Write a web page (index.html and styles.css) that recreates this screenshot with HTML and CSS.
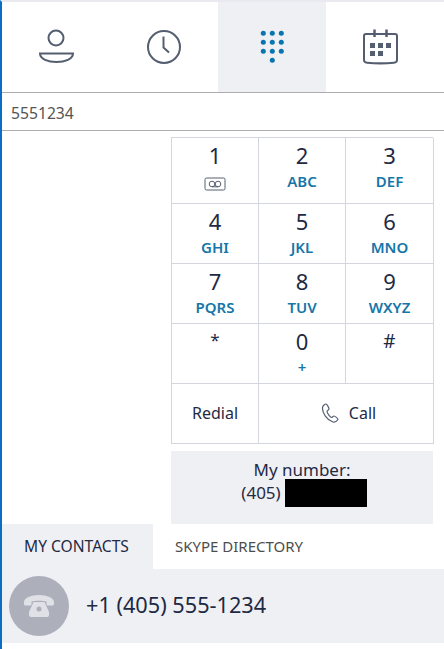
FILE: index.html
```html
<!DOCTYPE html>
<html lang="en">
<head>
    <meta charset="UTF-8">
    <meta name="viewport" content="width=device-width, initial-scale=1.0">
    <title>Dial Pad</title>
    <link rel="stylesheet" href="styles.css">
</head>
<body>

    <div class="app">
        <nav class="main-tabs">
            <div class="main-tab">
                <svg class="tab-icon" viewBox="0 0 40 40">
                    <circle cx="20" cy="11" r="7.5"/>
                    <path d="M4 26.5H37C37 32 29 35 20.5 35C12 35 4 32 4 26.5Z"/>
                </svg>
            </div>
            <div class="main-tab">
                <svg class="tab-icon" viewBox="0 0 40 40">
                    <circle cx="20" cy="20" r="16"/>
                    <path d="M19.5 9.5V20.5L25 25.5"/>
                </svg>
            </div>
            <div class="main-tab active">
                <svg class="tab-icon dots" viewBox="0 0 40 40">
                    <circle cx="11.3" cy="6.3" r="2.5"/><circle cx="20.3" cy="6.3" r="2.5"/><circle cx="29.3" cy="6.3" r="2.5"/>
                    <circle cx="11.3" cy="15.3" r="2.5"/><circle cx="20.3" cy="15.3" r="2.5"/><circle cx="29.3" cy="15.3" r="2.5"/>
                    <circle cx="11.3" cy="24.3" r="2.5"/><circle cx="20.3" cy="24.3" r="2.5"/><circle cx="29.3" cy="24.3" r="2.5"/>
                    <circle cx="20.3" cy="33.3" r="2.5"/>
                </svg>
            </div>
            <div class="main-tab">
                <svg class="tab-icon" viewBox="0 0 40 40">
                    <path d="M6 7H35C36.5 7 37 8 37 9V33C37 35 36 35.500 34 35.700C26 36.500 15 36.500 7 35.700C5 35.500 4 35 4 33V9C4 8 4.500 7 6 7Z"/>
                    <path class="peg" d="M14.500 2.500V10M26.500 2.500V10"/>
                    <path class="fill" d="M10 16h5v5h-5zM18 16h5v5h-5zM26 16h5v5h-5zM10 24h5v5h-5zM18 24h5v5h-5z"/>
                </svg>
            </div>
        </nav>

        <div class="number-input">5551234</div>

        <div class="dial-area">
            <div class="keypad">
                <div class="key">
                    <span class="digit">1</span>
                    <svg class="voicemail" viewBox="0 0 22 14">
                        <rect x="1" y="1" width="20" height="12" rx="1.500"/>
                        <circle cx="8" cy="7" r="2.800"/>
                        <circle cx="14" cy="7" r="2.800"/>
                        <path d="M8 9.800H14"/>
                    </svg>
                </div>
                <div class="key"><span class="digit">2</span><span class="letters">ABC</span></div>
                <div class="key"><span class="digit">3</span><span class="letters">DEF</span></div>
                <div class="key"><span class="digit">4</span><span class="letters">GHI</span></div>
                <div class="key"><span class="digit">5</span><span class="letters">JKL</span></div>
                <div class="key"><span class="digit">6</span><span class="letters">MNO</span></div>
                <div class="key"><span class="digit">7</span><span class="letters">PQRS</span></div>
                <div class="key"><span class="digit">8</span><span class="letters">TUV</span></div>
                <div class="key"><span class="digit">9</span><span class="letters">WXYZ</span></div>
                <div class="key"><span class="digit star">*</span></div>
                <div class="key"><span class="digit">0</span><span class="letters">+</span></div>
                <div class="key"><span class="digit hash">#</span></div>
                <div class="key action">Redial</div>
                <div class="key action call">
                    <svg class="call-icon" viewBox="0 0 18 20">
                        <path d="M1.500 4.500C1 10 6 17 12 19C14 19.500 16 18 17 16.500C17 15.500 14 13 13 13C12 13 11.500 14.500 10.500 14.500C9 14 6 10 6 8.500C6 7.500 8 7 8 6C8 5 6 1 5 1C4 1 2 2.500 1.500 4.500Z"/>
                    </svg>
                    Call
                </div>
            </div>

            <div class="my-number">
                <div>My number:</div>
                <div class="my-number-line">(405) <span class="redacted"></span></div>
            </div>
        </div>

        <div class="sub-tabs">
            <div class="sub-tab active">MY CONTACTS</div>
            <div class="sub-tab">SKYPE DIRECTORY</div>
        </div>

        <div class="contact-row">
            <div class="avatar">
                <svg class="avatar-icon" viewBox="0 0 30 22">
                    <path d="M0 7C0 3 7 0 15 0C23 0 30 3 30 7V9C30 10 29 10.500 28 10.500H24C23 10.500 22.500 10 22.500 9V6.500C20 5.500 10 5.500 7.500 6.500V9C7.500 10 7 10.500 6 10.500H2C1 10.500 0 10 0 9Z"/>
                    <path fill-rule="evenodd" d="M9.500 7H20.500L25 17V20C25 21 24 22 23 22H7C6 22 5 21 5 20V17ZM15 11.500A2.500 2.500 0 1 0 15 16.500A2.500 2.500 0 1 0 15 11.500Z"/>
                </svg>
            </div>
            <span class="contact-number">+1 (405) 555-1234</span>
        </div>
    </div>

</body>
</html>
```

FILE: styles.css
```css
/* General Styles */
* {
    margin: 0;
    padding: 0;
    box-sizing: border-box;
}

body {
    font-family: "Noto Sans", "Open Sans", sans-serif;
    background-color: white;
    color: #1f2a44;
}

.app {
    width: 444px;
    height: 649px;
    border-left: 2px solid #0a6fc2;
    border-top: 2px solid #e9e9ef;
    overflow: hidden;
}

/* Top tabs */
.main-tabs {
    display: grid;
    grid-template-columns: repeat(4, 108px);
    height: 91px;
    border-bottom: 1px solid #adadad;
}

.main-tab {
    display: flex;
    justify-content: center;
    align-items: center;
}

.main-tab.active {
    background-color: #eff0f4;
}

.tab-icon {
    width: 40px;
    height: 40px;
    fill: none;
    stroke: #555e70;
    stroke-width: 2;
}

.tab-icon.dots {
    fill: #0a74b0;
    stroke: none;
}

.tab-icon .peg {
    stroke-width: 2.500;
}

.tab-icon .fill {
    fill: #555e70;
    stroke: none;
}

/* Number field */
.number-input {
    height: 38px;
    padding: 10px 0 0 9px;
    font-size: 15.700px;
    line-height: 20px;
    color: #555;
    border-bottom: 1px solid #adadad;
}

/* Keypad */
.dial-area {
    width: 262px;
    margin: 6px 0 0 169px;
}

.keypad {
    display: grid;
    grid-template-columns: 87px 87px 88px;
    grid-template-rows: 66px repeat(4, 60px);
    border-top: 1px solid #d3d6df;
    border-left: 1px solid #d3d6df;
}

.key {
    display: flex;
    flex-direction: column;
    align-items: center;
    border-right: 1px solid #d3d6df;
    border-bottom: 1px solid #d3d6df;
}

.digit {
    font-size: 22px;
    line-height: 30px;
    margin-top: 2px;
}

.digit.star {
    font-size: 17px;
    margin-top: 1px;
}

.digit.hash {
    font-size: 19px;
}

.letters {
    font-size: 15px;
    line-height: 20px;
    font-weight: 600;
    color: #1676a8;
    margin-top: 1px;
}

.voicemail {
    width: 22px;
    height: 14px;
    margin-top: 7px;
    fill: none;
    stroke: #555e70;
    stroke-width: 1;
}

.key.action {
    flex-direction: row;
    justify-content: center;
    font-size: 16px;
    padding-bottom: 2px;
}

.key.call {
    grid-column: span 2;
    gap: 10px;
    padding-left: 5px;
}

.call-icon {
    width: 18px;
    height: 20px;
    fill: none;
    stroke: #555e70;
    stroke-width: 1.200;
}

/* My number */
.my-number {
    height: 73px;
    margin-top: 7px;
    padding-top: 7px;
    background-color: #eff0f4;
    text-align: center;
    font-size: 17px;
    line-height: 24px;
}

.my-number-line {
    display: flex;
    justify-content: center;
    align-items: center;
    gap: 4px;
    margin-top: -3px;
    padding-left: 4px;
}

.redacted {
    width: 82px;
    height: 28px;
    background-color: black;
}

/* Contact tabs */
.sub-tabs {
    display: flex;
    height: 45px;
}

.sub-tab {
    width: 151px;
    padding-left: 22px;
    font-size: 15px;
    line-height: 45px;
    color: #4d4d4d;
    white-space: nowrap;
}

.sub-tab.active {
    background-color: #eff0f4;
    color: #1f2a44;
    font-size: 15.600px;
}

/* Contact row */
.contact-row {
    display: flex;
    align-items: center;
    gap: 17px;
    height: 74px;
    padding-left: 7px;
    background-color: #eff0f4;
}

.avatar {
    display: flex;
    justify-content: center;
    align-items: center;
    width: 60px;
    height: 60px;
    border-radius: 50%;
    background-color: #adb0bb;
}

.avatar-icon {
    width: 30px;
    height: 22px;
    fill: #dfe1e7;
}

.contact-number {
    font-size: 21.700px;
    line-height: 28px;
    margin-top: -2px;
}
```
